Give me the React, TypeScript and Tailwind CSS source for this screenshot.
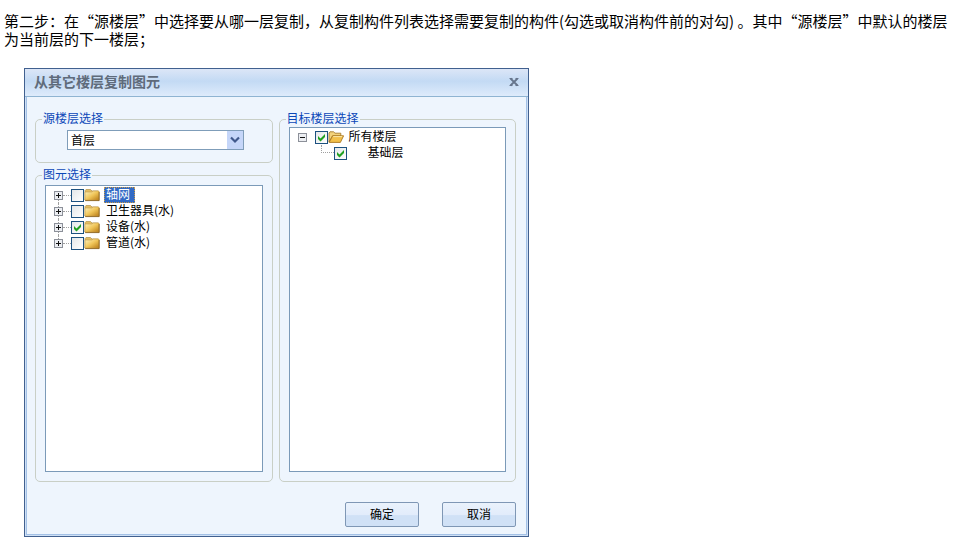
import { useState } from "react";
import type { ReactNode } from "react";

const elements = ["轴网", "卫生器具(水)", "设备(水)", "管道(水)"];

const FolderClosed = () => (
  <svg className="w-4 h-4 shrink-0" viewBox="0 0 16 16" aria-hidden="true">
    <defs>
      <linearGradient id="folder" x1="0" y1="0" x2="1" y2="1">
        <stop offset="0" stopColor="#fdf3c0" />
        <stop offset="0.5" stopColor="#f0c65a" />
        <stop offset="1" stopColor="#b87a14" />
      </linearGradient>
    </defs>
    <path d="M1 13V3.5L2 2.5h4.5L8 4h6v2H3z" fill="#e3bd62" stroke="#b99a55" strokeWidth="0.8" />
    <path d="M1 5h7l1.2-1H15v9.2H1z" fill="url(#folder)" stroke="#c29a48" strokeWidth="0.6" />
    <path d="M1.2 13.6H15.2V5" fill="none" stroke="#80560f" strokeWidth="0.8" />
  </svg>
);

const FolderOpen = () => (
  <svg className="w-4 h-4 shrink-0" viewBox="0 0 16 16" aria-hidden="true">
    <path d="M1 13V4l1-1.2h3.6L7 4.2h5.8V7H4.5z" fill="#f3d27a" stroke="#a67c2c" strokeWidth="0.9" />
    <path d="M1.2 13.4 4.6 6.8h11L12.4 13.4z" fill="#f2c04a" stroke="#a8761f" strokeWidth="0.9" />
    <path d="M5.2 7.6h9" stroke="#fdeeb5" strokeWidth="0.9" />
  </svg>
);

const Expander = ({ open, label, onClick }: { open: boolean; label: string; onClick?: () => void }) => (
  <button
    type="button"
    aria-label={label}
    aria-expanded={open}
    onClick={onClick}
    className="w-[9px] h-[9px] shrink-0 border border-[#8c9099] bg-[#eceef2]"
  >
    <svg className="w-[7px] h-[7px]" viewBox="0 0 7 7" shapeRendering="crispEdges" aria-hidden="true">
      <path d={open ? "M1 3h5v1H1z" : "M1 3h5v1H1zM3 1h1v5H3z"} fill="#111" />
    </svg>
  </button>
);

const Tick = ({ id, checked, onChange }: { id: string; checked: boolean; onChange: () => void }) => (
  <span className="grid w-[13px] h-[13px] shrink-0">
    <input
      id={id}
      type="checkbox"
      checked={checked}
      onChange={onChange}
      className="appearance-none col-start-1 row-start-1 w-[13px] h-[13px] border border-[#1c5180] bg-linear-to-br from-[#e4e7e9] to-white"
    />
    {checked && (
      <svg
        className="col-start-1 row-start-1 w-[13px] h-[13px] pointer-events-none"
        viewBox="0 0 13 13"
        aria-hidden="true"
      >
        <path d="M3 5v3l2.5 2.5L10 6V3L5.5 7.5z" fill="#21a121" />
      </svg>
    )}
  </span>
);

const Group = ({ title, className, children }: { title: string; className: string; children: ReactNode }) => (
  <fieldset className={`min-w-0 rounded-[5px] border border-[#c9cfc6] px-[9px] ${className}`}>
    <legend className="-ml-[3px] h-[14px] px-px text-xs leading-3 text-[#0b47b8]">{title}</legend>
    {children}
  </fieldset>
);

const DialogButton = ({ children }: { children: ReactNode }) => (
  <button
    type="button"
    className="w-[74px] h-[25px] rounded-[2px] border border-[#7f97b5] bg-linear-to-b from-[#eaf2fc] from-0% via-[#e2ecfb] via-50% to-[#d0e1f6] to-55% pb-[2px] text-xs text-black"
  >
    {children}
  </button>
);

const App = () => {
  const [checked, setChecked] = useState([false, false, true, false]);
  const [selected, setSelected] = useState(0);
  const [allFloors, setAllFloors] = useState(true);
  const [baseFloor, setBaseFloor] = useState(true);
  const [open, setOpen] = useState(true);

  const toggle = (index: number) => {
    setSelected(index);
    setChecked(checked.map((value, i) => (i === index ? !value : value)));
  };

  return (
    <main
      lang="zh-CN"
      className="bg-white px-1 pt-3 pb-3 font-['Noto_Sans_CJK_SC','Liberation_Sans',sans-serif] text-black"
    >
      <p className="text-[15px] leading-[18px]">
        第二步：在“源楼层”中选择要从哪一层复制，从复制构件列表选择需要复制的构件(勾选或取消构件前的对勾) 。其中“源楼层”中默认的楼层为当前层的下一楼层；
      </p>

      <section
        aria-labelledby="dialog-title"
        className="mt-5 ml-5 max-w-[505px] border border-[#41608f] bg-[#cfe0f5] text-xs"
      >
        <header className="flex items-center justify-between h-7 pl-[9px] pr-2 pb-[2px] border-b border-[#8fb4d2] bg-linear-to-b from-[#dce6f7] from-0% via-[#c3daf4] via-45% to-[#deebfb]">
          <h1 id="dialog-title" className="pb-[2px] text-sm leading-4 font-bold text-[#5f6b7b]">
            从其它楼层复制图元
          </h1>
          <button type="button" aria-label="关闭" className="w-3 h-3">
            <svg className="w-3 h-3" viewBox="0 0 12 12" aria-hidden="true">
              <path d="M2.5 2.5l7 7M9.5 2.5l-7 7" stroke="#66758c" strokeWidth="1.8" />
              <path d="M1.5 2.5h3M7.5 2.5h3M1.5 9.5h3M7.5 9.5h3" stroke="#66758c" strokeWidth="1" />
            </svg>
          </button>
        </header>

        <div className="mx-px mb-px border border-t-0 border-[#a3c1e6] bg-[#eef5fd] pt-[15px] pb-[7px] pl-2 pr-[10px]">
          <div className="grid grid-cols-2 gap-[6px]">
            <div className="flex min-w-0 flex-col gap-[5px]">
              <Group title="源楼层选择" className="pt-1 pb-3">
                <div className="relative ml-[22px] mr-[19px]">
                  <select
                    aria-label="源楼层选择"
                    className="block appearance-none w-full h-5 border border-[#7f9db9] bg-white pl-[3px] text-xs leading-[18px]"
                  >
                    <option>首层</option>
                    <option>基础层</option>
                  </select>
                  <span className="absolute top-px right-px flex items-center justify-center w-4 h-[18px] bg-[#c5d6f9] pointer-events-none">
                    <svg className="w-[10px] h-[8px]" viewBox="0 0 10 8" aria-hidden="true">
                      <path d="M1 1.5l4 4 4-4" fill="none" stroke="#40598c" strokeWidth="2.2" />
                    </svg>
                  </span>
                </div>
              </Group>

              <Group title="图元选择" className="flex flex-1 flex-col pt-[3px] pb-[9px]">
                <ul className="flex-1 min-h-[287px] border border-[#7b9ab8] bg-white p-px pl-2">
                  {elements.map((name, index) => (
                    <li key={name} className="flex items-center h-4">
                      <div className="flex flex-col items-center self-stretch">
                        <i className={`flex-1 border-l border-dotted ${index > 0 ? "border-[#a0a0a0]" : "border-transparent"}`} />
                        <Expander open={false} label={`展开${name}`} />
                        <i
                          className={`flex-1 border-l border-dotted ${
                            index < elements.length - 1 ? "border-[#a0a0a0]" : "border-transparent"
                          }`}
                        />
                      </div>
                      <i className="w-2 border-t border-dotted border-[#a0a0a0]" />
                      <Tick id={`element-${index}`} checked={checked[index]} onChange={() => toggle(index)} />
                      <FolderClosed />
                      <label
                        htmlFor={`element-${index}`}
                        className={`ml-1 h-4 border border-dotted px-px leading-3 whitespace-nowrap ${
                          selected === index ? "border-[#c89a4a] bg-[#316ac5] pr-1 text-white" : "border-transparent"
                        }`}
                      >
                        {name}
                      </label>
                    </li>
                  ))}
                </ul>
              </Group>
            </div>

            <Group title="目标楼层选择" className="flex flex-col pt-px pb-[9px]">
              <ul className="flex-1 border border-[#7b9ab8] bg-white p-px pl-2">
                <li>
                  <div className="flex items-center h-4">
                    <Expander open={open} label="所有楼层" onClick={() => setOpen(!open)} />
                    <span className="w-2" />
                    <Tick id="floor-all" checked={allFloors} onChange={() => setAllFloors(!allFloors)} />
                    <FolderOpen />
                    <label htmlFor="floor-all" className="ml-1 h-4 px-px leading-[14px] whitespace-nowrap">
                      所有楼层
                    </label>
                  </div>
                  {open && (
                    <ul>
                      <li className="flex items-center h-4 pl-[23px]">
                        <i className="w-[13px] h-2 self-start border-l border-b border-dotted border-[#a0a0a0]" />
                        <Tick id="floor-base" checked={baseFloor} onChange={() => setBaseFloor(!baseFloor)} />
                        <label htmlFor="floor-base" className="ml-5 h-4 px-px leading-[14px] whitespace-nowrap">
                          基础层
                        </label>
                      </li>
                    </ul>
                  )}
                </li>
              </ul>
            </Group>
          </div>

          <div className="flex justify-end gap-[23px] mt-5">
            <DialogButton>确定</DialogButton>
            <DialogButton>取消</DialogButton>
          </div>
        </div>
      </section>
    </main>
  );
};

export default App;
